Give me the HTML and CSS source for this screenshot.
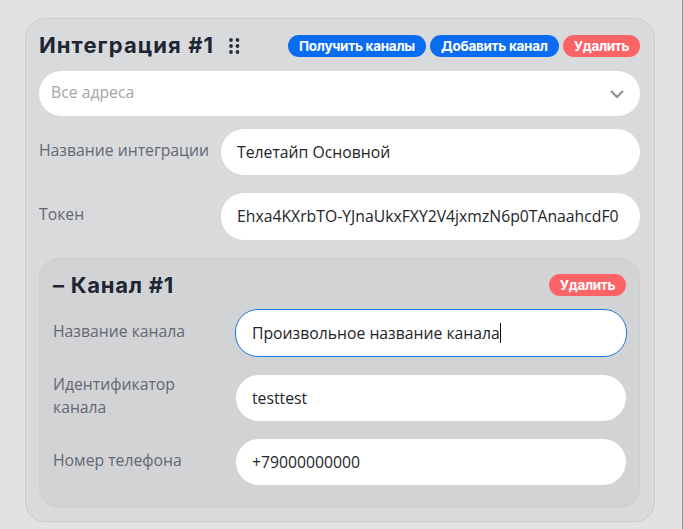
FILE: index.html
```html
<!DOCTYPE html>
<html lang="ru">
<head>
<meta charset="utf-8">
<title>Интеграция</title>
<link rel="stylesheet" href="styles.css">
</head>
<body>
<section class="card">
  <header class="head">
    <h2 class="title">Интеграция #1</h2>
    <svg class="grip" width="11" height="16" viewBox="0 0 11 16" aria-hidden="true">
      <circle cx="2" cy="2" r="1.9"/><circle cx="8.5" cy="2" r="1.9"/>
      <circle cx="2" cy="8" r="1.9"/><circle cx="8.5" cy="8" r="1.9"/>
      <circle cx="2" cy="14" r="1.9"/><circle cx="8.5" cy="14" r="1.9"/>
    </svg>
    <div class="actions">
      <button class="btn blue">Получить каналы</button>
      <button class="btn blue">Добавить канал</button>
      <button class="btn red">Удалить</button>
    </div>
  </header>
  <div class="select">
    <span>Все адреса</span>
    <svg width="16" height="10" viewBox="0 0 16 10" aria-hidden="true"><path d="M2 2l6 6 6-6" fill="none" stroke="#8f9094" stroke-width="2.2"/></svg>
  </div>
  <div class="row first"><label>Название интеграции</label><div class="input">Телетайп Основной</div></div>
  <div class="row second"><label>Токен</label><div class="input clip">Ehxa4KXrbTO-YJnaUkxFXY2V4jxmzN6p0TAnaahcdF0</div></div>
  <section class="inner">
    <header class="inner-head">
      <h3 class="subtitle">– Канал #1</h3>
      <button class="btn red">Удалить</button>
    </header>
    <div class="row r1"><label>Название канала</label><div class="input focus">Произвольное название канала<i class="caret"></i></div></div>
    <div class="row r2"><label>Идентификатор канала</label><div class="input">testtest</div></div>
    <div class="row r3"><label>Номер телефона</label><div class="input">+79000000000</div></div>
  </section>
</section>
</body>
</html>
```
FILE: styles.css
```css
* { box-sizing: border-box; }
html, body { margin: 0; height: 100%; overflow: hidden; }
body { background: #e1e2e4; padding: 18px 27px 0 25px; border-right: 1px solid #97989a; font-family: "Open Sans", sans-serif; color: #1f2937; }
.card { width: 630px; height: 504px; background: #d9dadc; border: 1px solid #cbccce; border-radius: 20px; padding: 13px 14px 0 13px; }
.head { display: flex; align-items: center; height: 28px; margin-bottom: 11px; }
.title { margin: 0 0 2px; font: 700 22px/28px Inter, sans-serif; color: #1e2533; letter-spacing: 1.08px; white-space: nowrap; }
.grip { fill: #2a303c; margin-left: 15px; }
.actions { margin-left: auto; display: flex; gap: 4px; }
.btn { border: 0; height: 22px; border-radius: 11px; padding: 0 11px; font: 700 13.5px/22px Inter, sans-serif; color: #fff; letter-spacing: -.35px; white-space: nowrap; }
.blue { background: #0a6cf0; letter-spacing: -.27px; }
.red { background: #fb6366; }
.select { height: 45px; border-radius: 23px; background: #fff; display: flex; align-items: center; justify-content: space-between; padding: 0 15px 4px 12px; font-size: 15.75px; color: #a3a5a9; margin-bottom: 13px; }
.select svg { margin-top: 4px; }
.row { display: flex; align-items: flex-start; }
.row label { flex: none; font-size: 15.75px; line-height: 23px; color: #646873; padding-top: 10px; }
.input { flex: 1; min-width: 0; height: 46px; border-radius: 23px; background: #fff; padding: 0 16px; font-size: 15.75px; line-height: 46px; color: #212529; white-space: nowrap; }
.card > .row label { width: 182px; }
.first { margin-bottom: 18px; }
.second { margin-bottom: 18px; }
.second .input { height: 47px; line-height: 47px; }
.clip { overflow: hidden; }
.inner { height: 250px; background: #d2d3d5; border: 1px solid #cdced0; border-radius: 20px; padding: 13px 13px 0 13px; }
.inner-head { display: flex; align-items: center; justify-content: space-between; height: 26px; margin-bottom: 11px; }
.subtitle { margin: 0; font: 700 22px/26px Inter, sans-serif; color: #1e2533; letter-spacing: .75px; }
.inner .row label { width: 183px; padding-right: 20px; }
.r1 { margin-bottom: 18px; }
.r2 { margin-bottom: 18px; }
.r1 label { position: relative; top: 1px; }
.r1 .input { height: 48px; line-height: 46px; margin: 0 -1px; border: 1px solid #1f74d8; }
.r2 label { margin-top: -2px; padding-top: 0; }
.caret { display: inline-block; width: 1px; height: 20px; background: #111; vertical-align: -4px; }
```
